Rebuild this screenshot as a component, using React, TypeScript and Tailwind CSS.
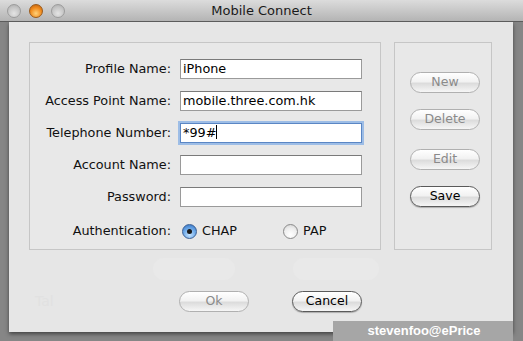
import React from 'react';

const font = { fontFamily: '"DejaVu Sans", "Lucida Grande", sans-serif' };

function Light({ active }: { active?: boolean }) {
  return (
    <div
      className={
        active
          ? 'w-[14px] h-[14px] rounded-full border border-[#9a5a1a] bg-[radial-gradient(circle_at_50%_70%,#ffd27a_0%,#f08a1c_55%,#b55a10_100%)]'
          : 'w-[14px] h-[14px] rounded-full border border-[#9c9c9c] bg-[radial-gradient(circle_at_50%_70%,#e4e4e4_0%,#c4c4c4_60%,#a8a8a8_100%)]'
      }
    />
  );
}

function AquaButton({ label, disabled, className }: { label: string; disabled?: boolean; className?: string }) {
  return (
    <div
      className={
        'h-[21px] w-[70px] rounded-full flex items-center justify-center text-[12.5px] bg-[linear-gradient(#ffffff_0%,#f2f2f2_45%,#dcdcdc_55%,#f6f6f6_100%)] ' +
        (disabled
          ? 'border border-[#b0b0b0] text-[#8a8a8a] '
          : 'border border-[#5a5a5a] text-black shadow-[0_1px_1px_rgba(0,0,0,0.25)] ') +
        (className ?? '')
      }
    >
      {label}
    </div>
  );
}

function Field({ label, value, focused }: { label: string; value?: string; focused?: boolean }) {
  return (
    <>
      <div className="text-right text-[12.8px] text-[#111] leading-[20px]">{label}</div>
      <div
        className={
          'h-[20px] bg-white text-[12.8px] text-black leading-[18px] px-[2px] ' +
          (focused
            ? 'border border-[#5a86c4] shadow-[0_0_0_2px_#9dbde6]'
            : 'border border-[#9a9a9a] border-t-[#7a7a7a]')
        }
      >
        {value}
        {focused && <span className="inline-block w-px h-[14px] bg-black align-[-2px]" />}
      </div>
    </>
  );
}

function Radio({ on, label }: { on?: boolean; label: string }) {
  return (
    <div className="flex items-center gap-[5px]">
      {on ? (
        <div className="w-[15px] h-[15px] rounded-full border border-[#3a5f94] bg-[radial-gradient(circle_at_50%_75%,#c6e4ff_0%,#6aa6e6_55%,#2d6cc0_100%)] flex items-center justify-center">
          <div className="w-[5px] h-[5px] rounded-full bg-[#1a1a1a]" />
        </div>
      ) : (
        <div className="w-[15px] h-[15px] rounded-full border border-[#8a8a8a] bg-[radial-gradient(circle_at_50%_75%,#ffffff_0%,#eeeeee_55%,#cfcfcf_100%)]" />
      )}
      <span className="text-[12.8px] text-[#111]">{label}</span>
    </div>
  );
}

export default function App() {
  return (
    <div className="w-[523px] h-[341px] bg-[#868686] relative overflow-hidden" style={font}>
      {/* title bar */}
      <div className="h-[22px] flex items-center bg-[linear-gradient(#dcdcdc,#b4b4b4)] border-b border-[#5c5c5c] relative">
        <div className="flex items-center gap-[8px] pl-[7px]">
          <Light />
          <Light active />
          <Light />
        </div>
        <div className="absolute inset-0 flex items-center justify-center text-[13px] text-[#1a1a1a]">
          Mobile Connect
        </div>
      </div>

      {/* window body */}
      <div className="ml-[9px] w-[504px] h-[310px] bg-[#e6e6e6] shadow-[0_2px_4px_rgba(0,0,0,0.5)] pt-[20px] px-[20px]">
        <div className="flex gap-[13px]">
          <div className="w-[352px] h-[208px] border border-[#c6c6c6] bg-[#e8e8e8] pt-[16px]">
            <div className="grid grid-cols-[141px_182px] gap-x-[9px] gap-y-[12px]">
              <Field label="Profile Name:" value="iPhone" />
              <Field label="Access Point Name:" value="mobile.three.com.hk" />
              <Field label="Telephone Number:" value="*99#" focused />
              <Field label="Account Name:" />
              <Field label="Password:" />
              <div className="text-right text-[12.8px] text-[#111] leading-[20px] mt-[2px]">Authentication:</div>
              <div className="flex items-center gap-[46px] pl-[2px] mt-[2px]">
                <Radio on label="CHAP" />
                <Radio label="PAP" />
              </div>
            </div>
          </div>
          <div className="w-[98px] h-[208px] border border-[#c6c6c6] bg-[#e8e8e8] pl-[15px] pt-[29px] flex flex-col">
            <AquaButton label="New" disabled />
            <AquaButton label="Delete" disabled className="mt-[16px]" />
            <AquaButton label="Edit" disabled className="mt-[19px]" />
            <AquaButton label="Save" className="mt-[16px]" />
          </div>
        </div>

        {/* faint ghosted controls */}
        <div className="flex gap-[58px] ml-[124px] mt-[8px] h-[22px]">
          <div className="w-[82px] rounded-full bg-[#e9e9e9]" />
          <div className="w-[86px] rounded-full bg-[#e9e9e9]" />
        </div>

        <div className="flex items-center mt-[11px]">
          <div className="w-[150px] pl-[6px] text-[14px] text-[#e1e1e1]">Tal</div>
          <AquaButton label="Ok" disabled />
          <AquaButton label="Cancel" className="ml-[43px]" />
        </div>
      </div>

      {/* watermark */}
      <div className="absolute left-[333px] top-[321px] w-[180px] h-[20px] bg-[#a6a6a6] flex items-center justify-center pl-[2px]">
        <span className="text-[13px] font-bold text-white" style={{ fontFamily: '"Liberation Sans", Arial, sans-serif' }}>
          stevenfoo@ePrice
        </span>
      </div>
    </div>
  );
}
